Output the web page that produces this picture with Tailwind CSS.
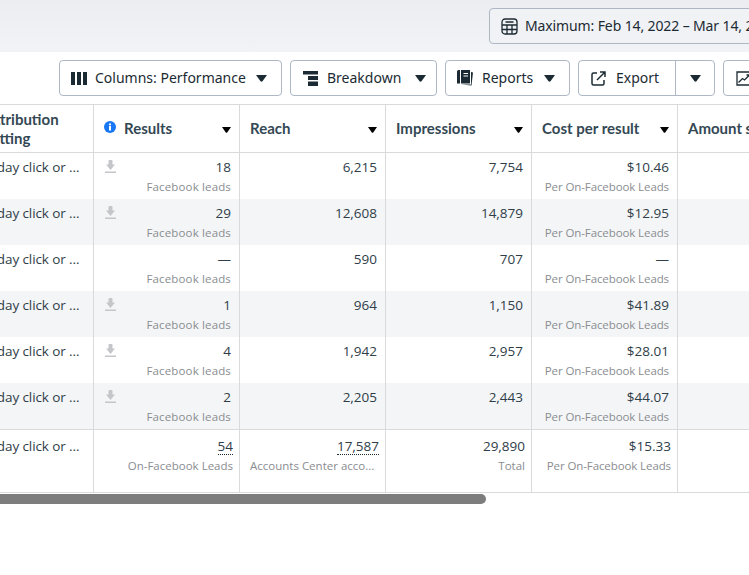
<!DOCTYPE html>
<html lang="en">
<head>
  <meta charset="UTF-8" />
  <title>Ads Manager</title>
  <script src="https://cdn.jsdelivr.net/npm/@tailwindcss/browser@4"></script>
</head>
<body class="bg-white w-[749px] h-[575px] overflow-hidden font-['Open_Sans',sans-serif] text-[#2f3e48]">
  <!-- date bar -->
  <div class="h-[52px] bg-gradient-to-b from-[#ebedf1] to-[#f1f3f6] pt-2 pl-[489px] overflow-hidden">
    <div class="w-[300px] h-9 border border-[#aeb8c4] rounded bg-[#f0f2f5] flex items-center pl-[11px] gap-[7px] font-['Noto_Sans',sans-serif] text-[14px] tracking-[-0.12px] text-[#1c2b33] whitespace-nowrap">
      <svg class="w-[17px] h-[17px] shrink-0" viewBox="0 0 17 17" fill="none" stroke="#1c2b33" stroke-width="1.300"><rect x="1" y="1" width="15" height="15" rx="3"/><path d="M1 7h15M1 11.500h15M6 7v9M11 7v9M4.500 4h8"/></svg>
      <span class="-mt-[2px]">Maximum: Feb 14, 2022 – Mar 14, 2022</span>
    </div>
  </div>

  <!-- toolbar -->
  <div class="h-[52px] pt-2 pl-[59px] flex gap-2 font-['Noto_Sans',sans-serif] text-[14px] text-[#1c2b33] whitespace-nowrap overflow-hidden">
    <button class="w-[223px] h-9 border border-[#aeb8c4] rounded flex items-center pl-[11px] shrink-0">
      <svg class="w-4 h-[13px] mr-2" viewBox="0 0 16 13" fill="#1c2b33"><path d="M0 0h4v13H0zM6 0h4v13H6zM12 0h4v13h-4z"/></svg>
      <span class="-mt-[2px]">Columns: Performance</span>
      <svg class="w-[11px] h-[7px] ml-[10px]" viewBox="0 0 11 7" fill="#1c2b33"><path d="M0 0h11L6.500 6.200q-1 .9-2 0z"/></svg>
    </button>
    <button class="w-[147px] h-9 border border-[#aeb8c4] rounded flex items-center pl-[12px] shrink-0">
      <svg class="w-[15px] h-[15px] mr-[9px]" viewBox="0 0 15 15" fill="#1c2b33"><path d="M0 0h15v3.500H0zM5 5h10v4H5zM5 10.500h10V15H5z"/></svg>
      <span class="-mt-[2px]">Breakdown</span>
      <svg class="w-[11px] h-[7px] ml-[14px]" viewBox="0 0 11 7" fill="#1c2b33"><path d="M0 0h11L6.500 6.200q-1 .9-2 0z"/></svg>
    </button>
    <button class="w-[125px] h-9 border border-[#aeb8c4] rounded flex items-center pl-[11px] shrink-0">
      <svg class="w-4 h-4 mr-[9px]" viewBox="0 0 16 16" fill="#1c2b33"><path d="M0 1.500Q0 0 1.500 0H3v13.500H0zM4 0h9v13.500H4zM6.500 3v1H11V3zM6.500 5.500v1H11v-1zM14 2l2 .5-1.500 13L4 14.500h10z"/></svg>
      <span class="-mt-[2px]">Reports</span>
      <svg class="w-[11px] h-[7px] ml-[11px]" viewBox="0 0 11 7" fill="#1c2b33"><path d="M0 0h11L6.500 6.200q-1 .9-2 0z"/></svg>
    </button>
    <div class="w-[137px] h-9 border border-[#aeb8c4] rounded flex items-center shrink-0">
      <div class="w-[97px] h-full flex items-center pl-3 border-r border-[#aeb8c4]">
        <svg class="w-[15px] h-[15px] mr-[10px]" viewBox="0 0 15 15" fill="none" stroke="#1c2b33" stroke-width="1.500"><path d="M6 2H2.500Q1 2 1 3.500v9Q1 14 2.500 14h9q1.500 0 1.500-1.500V9M6 9l8-8M9 1h5v5"/></svg>
        <span class="-mt-[2px]">Export</span>
      </div>
      <div class="flex-1 flex justify-center">
        <svg class="w-[11px] h-[7px]" viewBox="0 0 11 7" fill="#1c2b33"><path d="M0 0h11L6.500 6.200q-1 .9-2 0z"/></svg>
      </div>
    </div>
    <div class="w-[60px] h-9 border border-[#aeb8c4] rounded flex items-center pl-[12px] shrink-0">
      <svg class="w-[15px] h-[15px]" viewBox="0 0 15 15" fill="none" stroke="#1c2b33" stroke-width="1.300"><path d="M14 5V1H1v13h13v-3"/><path d="M2.500 11.500l4-4 2 1.500 5-5M10.500 4h3.500v3"/></svg>
    </div>
  </div>

  <!-- table -->
  <div id="table" class="w-[749px] overflow-hidden border-t border-[#d9dadc] text-[13.5px]">
    <div class="grid grid-cols-[94px_146px_146px_146px_146px_146px] w-[824px] h-12 border-b border-[#d9dadc] font-['Lato',sans-serif] font-bold text-[15px] text-[#344854]">
      <div class="border-r border-[#d9dadc] pt-[5px] leading-[19px] -ml-[15px] w-[109px] whitespace-nowrap">Attribution<br>setting</div>
      <div class="border-r border-[#d9dadc] flex items-center pl-[10px] pr-[8px]">
        <svg class="w-3 h-3 mr-2 -mt-[3px]" viewBox="0 0 12 12"><circle cx="6" cy="6" r="6" fill="#1877f2"/><path d="M5 5h2v4.500H5zM5 2.500h2v1.700H5z" fill="#fff"/></svg>
        <span class="-mt-[1px]">Results</span>
        <svg class="w-[9px] h-[6px] ml-auto mt-[2px]" viewBox="0 0 9 6"><path d="M0 0h9L5.200 5.400q-.7.600-1.400 0z" fill="#000"/></svg>
      </div>
      <div class="border-r border-[#d9dadc] flex items-center pl-[10px] pr-[8px]">
        <span class="-mt-[1px]">Reach</span>
        <svg class="w-[9px] h-[6px] ml-auto mt-[2px]" viewBox="0 0 9 6"><path d="M0 0h9L5.200 5.400q-.7.600-1.400 0z" fill="#000"/></svg>
      </div>
      <div class="border-r border-[#d9dadc] flex items-center pl-[10px] pr-[8px]">
        <span class="-mt-[1px]">Impressions</span>
        <svg class="w-[9px] h-[6px] ml-auto mt-[2px]" viewBox="0 0 9 6"><path d="M0 0h9L5.200 5.400q-.7.600-1.400 0z" fill="#000"/></svg>
      </div>
      <div class="border-r border-[#d9dadc] flex items-center pl-[10px] pr-[8px]">
        <span class="-mt-[1px]">Cost per result</span>
        <svg class="w-[9px] h-[6px] ml-auto mt-[2px]" viewBox="0 0 9 6"><path d="M0 0h9L5.200 5.400q-.7.600-1.400 0z" fill="#000"/></svg>
      </div>
      <div class="flex items-center pl-[10px] whitespace-nowrap"><span class="-mt-[1px]">Amount spent</span></div>
    </div>
    <div id="rows"></div>
    <!-- totals -->
    <div class="grid grid-cols-[94px_146px_146px_146px_146px_146px] w-[824px] h-[64px] border-t border-b border-[#d9dadc]">
      <div class="border-r border-[#d9dadc] pt-[6px] leading-5 whitespace-nowrap -ml-[15px] w-[109px] tracking-[-0.1px]">7-day click or ...</div>
      <div class="border-r border-[#d9dadc] pt-[6px] pr-[6px] text-right">
        <div class="leading-5"><span class="border-b border-dotted border-[#1c2b33] leading-4 inline-block">54</span></div>
        <div class="text-[11.5px] leading-5 text-[#8a8d91]">On-Facebook Leads</div>
      </div>
      <div class="border-r border-[#d9dadc] pt-[6px] pr-[6px] text-right">
        <div class="leading-5"><span class="border-b border-dotted border-[#1c2b33] leading-4 inline-block">17,587</span></div>
        <div class="text-[11.5px] leading-5 text-[#8a8d91] text-left pl-[10px] whitespace-nowrap">Accounts Center acco...</div>
      </div>
      <div class="border-r border-[#d9dadc] pt-[6px] pr-[6px] text-right">
        <div class="leading-5">29,890</div>
        <div class="text-[11.5px] leading-5 text-[#8a8d91]">Total</div>
      </div>
      <div class="border-r border-[#d9dadc] pt-[6px] pr-[6px] text-right">
        <div class="leading-5">$15.33</div>
        <div class="text-[11.5px] leading-5 text-[#8a8d91] tracking-[-0.1px] whitespace-nowrap">Per On-Facebook Leads</div>
      </div>
      <div></div>
    </div>
  </div>

  <!-- scrollbar -->
  <div class="h-[10px] mt-[1px] w-[486px] bg-[#7d7d7d] rounded-r-[5px]"></div>

  <script>
    const data = [
      ['18', '6,215', '7,754', '$10.46'],
      ['29', '12,608', '14,879', '$12.95'],
      ['—', '590', '707', '—'],
      ['1', '964', '1,150', '$41.89'],
      ['4', '1,942', '2,957', '$28.01'],
      ['2', '2,205', '2,443', '$44.07'],
    ];
    const cell = 'border-r border-[#d9dadc] pt-[4px] pr-2 text-right';
    const sub = 'text-[11.5px] leading-5 text-[#8a8d91] whitespace-nowrap';
    const icon = '<svg class="absolute left-[11px] top-[7px] w-[11px] h-[13px]" viewBox="0 0 11 13" fill="#c4c6c9"><path d="M3.500 1q0-1 1-1h2q1 0 1 1v3.500h2.500L5.500 10 1 4.500h2.500zM0 11.500h11V13H0z"/></svg>';

    document.getElementById('rows').innerHTML = data.map((r, i) => {
      const bg = i % 2 ? 'bg-[#f4f5f7]' : 'bg-white';
      const dl = r[0] === '—' ? '' : icon;
      return `<div class="grid grid-cols-[94px_146px_146px_146px_146px_146px] w-[824px] h-[46px] ${bg}">
        <div class="border-r border-[#d9dadc] pt-[4px] leading-5 whitespace-nowrap -ml-[15px] w-[109px] tracking-[-0.1px]">7-day click or ...</div>
        <div class="${cell} relative">${dl}<div class="leading-5">${r[0]}</div><div class="${sub} tracking-[0.15px]">Facebook leads</div></div>
        <div class="${cell}"><div class="leading-5">${r[1]}</div></div>
        <div class="${cell}"><div class="leading-5">${r[2]}</div></div>
        <div class="${cell}"><div class="leading-5">${r[3]}</div><div class="${sub} tracking-[-0.1px]">Per On-Facebook Leads</div></div>
        <div></div>
      </div>`;
    }).join('');
  </script>
</body>
</html>
